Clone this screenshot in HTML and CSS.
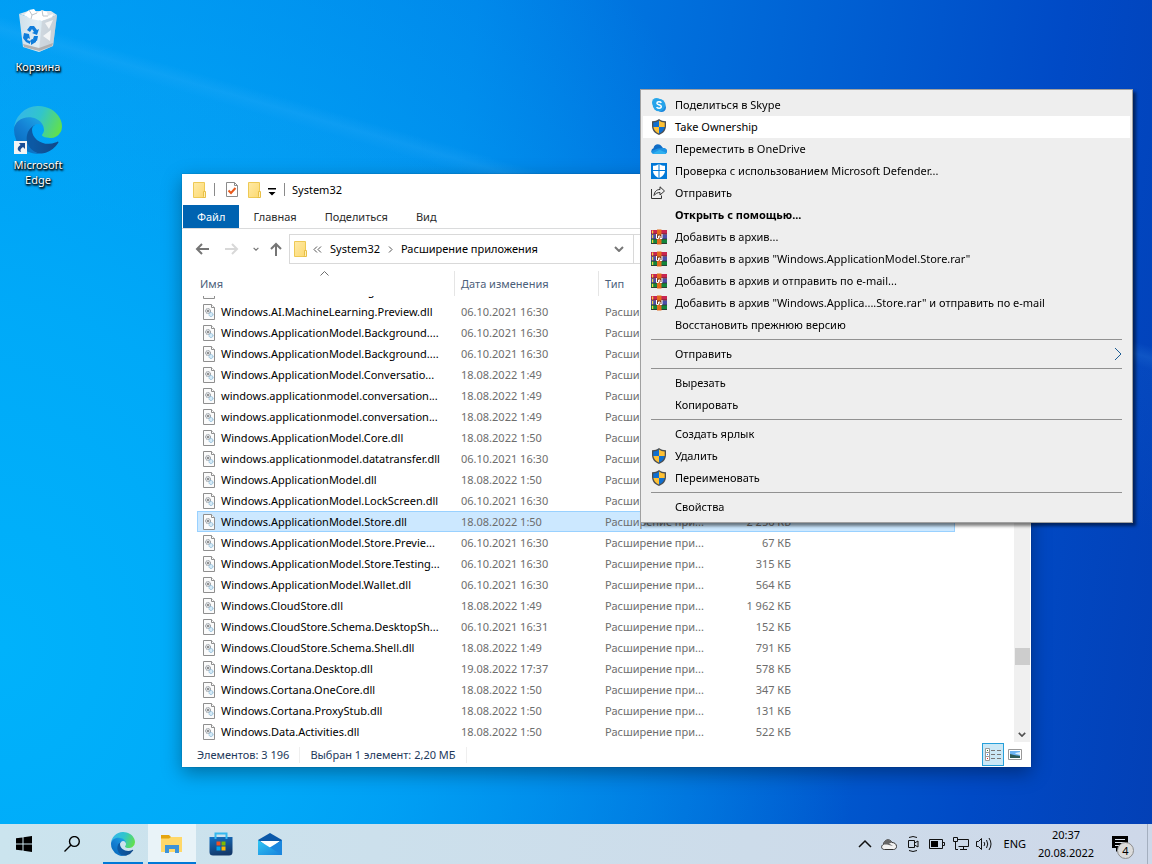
FILE: index.html
```html
<!DOCTYPE html>
<html lang="ru">
<head>
  <meta charset="UTF-8" />
  <title>System32</title>
  <link rel="stylesheet" href="styles.css">
</head>
<body>
  <svg class="sprite" aria-hidden="true">
    <defs>
      <linearGradient id="edgeNavy" x1="0.25" y1="0" x2="0.9" y2="0"><stop offset="0" stop-color="#0c59a4"/><stop offset="1" stop-color="#114a8b"/></linearGradient>
      <linearGradient id="edgeBlue" x1="0.8" y1="0.2" x2="0.2" y2="1"><stop offset="0" stop-color="#1b9de2"/><stop offset="0.4" stop-color="#1480d4"/><stop offset="1" stop-color="#0669bb"/></linearGradient>
      <linearGradient id="edgeGreen" x1="0" y1="0.3" x2="1" y2="0.6"><stop offset="0" stop-color="#35b5ec"/><stop offset="0.5" stop-color="#31c5cc"/><stop offset="1" stop-color="#62e04c"/></linearGradient>
      <linearGradient id="gold" x1="0" y1="0" x2="1" y2="1"><stop offset="0" stop-color="#ffeaa6"/><stop offset="1" stop-color="#fcd971"/></linearGradient>
      <linearGradient id="mailBlue" x1="0" y1="0" x2="1" y2="1"><stop offset="0" stop-color="#32c8f4"/><stop offset="1" stop-color="#1681dc"/></linearGradient>
      <linearGradient id="bagBlue" x1="0" y1="0" x2="0.3" y2="1"><stop offset="0" stop-color="#1473c8"/><stop offset="1" stop-color="#143a6c"/></linearGradient>
      <linearGradient id="binSide" x1="0" y1="0" x2="1" y2="0"><stop offset="0" stop-color="#dfe5ea"/><stop offset="0.5" stop-color="#f2f4f5"/><stop offset="1" stop-color="#c5cdd4"/></linearGradient>
    </defs>
    <symbol id="i-edge" viewBox="0 0 256 256">
      <g transform="translate(-4.63 -4.92)">
        <path fill="url(#edgeNavy)" d="M235.68,195.46a93.73,93.73,0,0,1-10.54,4.71,101.87,101.87,0,0,1-35.9,6.46c-47.32,0-88.54-32.55-88.54-74.32A31.48,31.48,0,0,1,117.13,105c-42.8,1.8-53.8,46.4-53.8,72.53,0,73.88,68.09,81.37,82.76,81.37,7.91,0,19.84-2.3,27-4.56l1.31-.44A128.34,128.34,0,0,0,241,201.1,4,4,0,0,0,235.68,195.46Z"/>
        <path fill="url(#edgeBlue)" d="M110.34,246.34A79.2,79.2,0,0,1,87.6,225a80.72,80.72,0,0,1,29.53-120c3.12-1.47,8.45-4.13,15.54-4a32.35,32.35,0,0,1,25.69,13,31.88,31.88,0,0,1,6.36,18.66c0-.21,24.46-79.6-80-79.6-43.9,0-80,41.66-80,78.21a130.15,130.15,0,0,0,12.11,56,128,128,0,0,0,156.38,67.11,75.55,75.55,0,0,1-62.78-8Z"/>
        <path fill="url(#edgeGreen)" d="M156.94,153.78c-.81,1.05-3.3,2.5-3.3,5.66,0,2.61,1.7,5.12,4.72,7.23,14.38,10,41.49,8.68,41.56,8.68a59.56,59.56,0,0,0,30.27-8.35A61.38,61.38,0,0,0,260.6,114.2c.26-22.41-8-37.31-11.34-43.91C228.08,28.76,182.35,4.89,132.61,4.89a128,128,0,0,0-128,126.2C5.09,94.6,41.35,65.12,84.61,65.12c3.5,0,23.46.34,42,10.07,16.34,8.58,24.9,18.94,30.85,29.21,6.18,10.67,7.28,24.15,7.28,29.52S162,147.27,156.94,153.78Z"/>
      </g>
    </symbol>
    <symbol id="i-bin" viewBox="0 0 48 48">
      <path d="M5 6L9 39L25 44L39 38L43 7L28 13Z" fill="url(#binSide)" opacity="0.93"/>
      <path d="M5 6L14 3L37 3L43 7L28 13Z" fill="#dfe5ea"/>
      <path d="M10 7L15 2L20 1L23 5L28 2L33 4L34 8L39 6L38 10L28 13L17 11Z" fill="#fff"/>
      <path d="M15 2L18 7L23 5M28 2L29 8L34 8M18 7L17 11" stroke="#bcc4ca" fill="none"/>
      <path d="M28 13L43 7L39 38L25 44Z" fill="#cbd2d8" opacity="0.75"/>
      <path d="M31 15L39 12L35 21ZM29 28L37 22L36 33Z" fill="#f3f5f6"/>
      <path d="M9 36L25 40L39 35L38 38L25 43L10 39Z" fill="#a9a5a4" opacity="0.8"/>
      <path d="M13 22L16 18L20 18L23 22L25 21L23 27L18 25L20 24L18 21L16 24ZM10 25L15 26L16 31L14 30L13 32L16 33L16 36L12 34L9 30ZM18 31L22 32L22 34L17 37L17 35L16 33ZM20 28L24 28L23 33L19 31Z" fill="#0f7ddb"/>
    </symbol>
    <symbol id="i-shortcut" viewBox="0 0 13 13">
      <path d="M0 0H13V13H0Z" fill="#f4f4f4"/>
      <path d="M5 2H11V8L9 6C6.500 7.500 6 9 7 11C3 10 2.500 6.500 6.500 4Z" fill="#1b4e95"/>
    </symbol>
    <symbol id="i-folder" viewBox="0 0 16 18">
      <path d="M1.500 1.500H12.500V16.500H1.500Z" fill="url(#gold)" stroke="#eec954"/>
      <path d="M11.500 10.500H13.500V16.500H10.500L11.500 15.500Z" fill="#fff0b8" stroke="#e8bf46"/>
    </symbol>
    <symbol id="i-check" viewBox="0 0 14 17">
      <path d="M1.500 1.500H9.500L12.500 4.500V15.500H1.500Z" fill="#fff" stroke="#8b8b8b"/>
      <path d="M9.500 1.500V4.500H12.500" fill="none" stroke="#8b8b8b"/>
      <path d="M3.500 9.500L6 12L10.500 7" fill="none" stroke="#e8591c" stroke-width="2"/>
    </symbol>
    <symbol id="i-dll" viewBox="0 0 12 16">
      <path d="M0.500 0.500H8.500L11.500 3.500V15.500H0.500Z" fill="#fbfbfb" stroke="#8f8f8f"/>
      <path d="M8.500 0.500V3.500H11.500" fill="#fff" stroke="#8f8f8f"/>
      <circle cx="5" cy="7" r="2.500" fill="#dcdfe2" stroke="#7f868c" stroke-dasharray="1 0.600"/>
      <circle cx="5" cy="7" r="1" fill="#777"/>
      <circle cx="8" cy="10.500" r="2" fill="#d5ebf8" stroke="#7eb0d0" stroke-dasharray="1 0.500"/>
    </symbol>
    <symbol id="i-skype" viewBox="0 0 16 16">
      <circle cx="5.500" cy="5.500" r="4.500" fill="#2aa8ea"/>
      <circle cx="10.500" cy="10.500" r="4.500" fill="#1b86dc"/>
      <circle cx="8" cy="8" r="6.300" fill="#26a3ea"/>
      <path d="M10.300 5.800C9.600 4.400 5.900 4.200 5.900 6.200C5.900 8.200 10.300 7.300 10.300 9.600C10.300 11.700 6.300 11.700 5.700 10" fill="none" stroke="#fff" stroke-width="1.500"/>
    </symbol>
    <symbol id="i-shield" viewBox="0 0 16 16">
      <path d="M8 0C10 1.500 12 2.200 15 2.200V7C15 11.500 12 14.500 8 16C4 14.500 1 11.500 1 7V2.200C4 2.200 6 1.500 8 0Z" fill="#4c4f52"/>
      <path d="M8 1.500V8H2.300V3.500C4.700 3.400 6.500 2.800 8 1.500Z" fill="#0f6fd0"/>
      <path d="M8 1.500V8H13.700V3.500C11.300 3.400 9.500 2.800 8 1.500Z" fill="#ffc134"/>
      <path d="M2.400 8H8V14.600C5 13.300 2.700 11 2.400 8Z" fill="#ffc134"/>
      <path d="M13.600 8H8V14.600C11 13.300 13.300 11 13.600 8Z" fill="#0f6fd0"/>
    </symbol>
    <symbol id="i-onedrive" viewBox="0 0 16 16">
      <path d="M3 12C0 12-0.500 8 2.500 7.200C3 3.500 8 1.500 10.800 5.500L12 7C14 7 16 8 16 10C16 12 14.500 13 13 13Z" fill="#0f6cc6"/>
      <path d="M3 13C1 13 0 11.500 0.300 10L7 7.500L12 7C14.500 7 16 8.300 16 10.300C16 12 14.500 13 13 13Z" fill="#1e93e4"/>
      <path d="M1.500 12.500L8.500 8.800L15.500 12C15 12.700 14 13 13 13H3C2.500 13 2 12.800 1.500 12.500Z" fill="#2fb0f0"/>
    </symbol>
    <symbol id="i-defender" viewBox="0 0 16 16">
      <path d="M0 0H16V16H0Z" fill="#0078d7"/>
      <path d="M8 1C10 2.300 12 2.800 14 2.800V7.500C14 11 11.500 13.700 8 15C4.500 13.700 2 11 2 7.500V2.800C4 2.800 6 2.300 8 1Z" fill="#fff"/>
      <path d="M7.500 1H8.500V15H7.500ZM2 7H14V8H2Z" fill="#0078d7"/>
    </symbol>
    <symbol id="i-share" viewBox="0 0 16 16" fill="none" stroke="#333">
      <path d="M0.500 4V13.500H10.500V10.500"/>
      <path d="M3 10.500C3.500 6.500 5.500 4.500 9 4.500V1.800L13.500 6L9 10V7.500C6.500 7.500 4.800 8.300 3 10.500Z"/>
    </symbol>
    <symbol id="i-rar" viewBox="0 0 16 16">
      <path d="M0 1H16V5.500H0Z" fill="#c8254f"/>
      <path d="M0 5.500H16V10H0Z" fill="#4b4fa8"/>
      <path d="M0 10H16V15H0Z" fill="#14853c"/>
      <path d="M0 5H16M0 10H16M0 14.500H16" stroke="#33232f" stroke-width="0.700"/>
      <path d="M1 1.500H2.200V4.500H1ZM1 6H2.200V9.300H1ZM1 10.700H2.200V14H1Z" fill="#f4d442"/>
      <path d="M6 0.500H10.500V15.500H6Z" fill="#e46a1c"/>
      <path d="M6 5.500H10.500V10H6Z" fill="#7d3a16"/>
      <path d="M5.500 5V9.500H7.500V7H9V9.500H11V5" fill="none" stroke="#fff"/>
    </symbol>
    <symbol id="i-chevron" viewBox="0 0 10 6"><path d="M1 1L5 5L9 1" fill="none" stroke="currentColor" stroke-width="2"/></symbol>
  </svg>

  <div class="desktop">
    <nav class="shortcuts">
      <a class="shortcut" href="#">
        <svg class="shortcut-icon"><use href="#i-bin"/></svg>
        <span>Корзина</span>
      </a>
      <a class="shortcut" href="#">
        <svg class="shortcut-icon"><use href="#i-edge"/></svg>
        <svg class="shortcut-arrow"><use href="#i-shortcut"/></svg>
        <span>Microsoft<br>Edge</span>
      </a>
    </nav>

    <main class="window">
      <header class="titlebar">
        <svg class="folder"><use href="#i-folder"/></svg>
        <i class="bar"></i>
        <svg class="check"><use href="#i-check"/></svg>
        <svg class="folder"><use href="#i-folder"/></svg>
        <svg class="more" viewBox="0 0 8 8"><path d="M0 0H8V1.500H0ZM0.500 4H7.500L4 7.500Z"/></svg>
        <i class="bar"></i>
        <h1>System32</h1>
      </header>

      <div class="tabs">
        <button class="tab file">Файл</button>
        <button class="tab">Главная</button>
        <button class="tab">Поделиться</button>
        <button class="tab">Вид</button>
      </div>

      <div class="navbar">
        <button class="nav-btn" aria-label="Назад"><svg viewBox="0 0 14 12"><path d="M14 6H2M7 1L2 6L7 11"/></svg></button>
        <button class="nav-btn off" aria-label="Вперед"><svg viewBox="0 0 14 12"><path d="M0 6H12M7 1L12 6L7 11"/></svg></button>
        <button class="nav-btn small" aria-label="Журнал"><svg class="chev"><use href="#i-chevron"/></svg></button>
        <button class="nav-btn up" aria-label="Вверх"><svg viewBox="0 0 14 14"><path d="M7 14V2M2 7L7 2L12 7"/></svg></button>
        <div class="address">
          <svg class="folder"><use href="#i-folder"/></svg>
          <svg class="crumb-sep double" viewBox="0 0 9 7"><path d="M4 0.500L1 3.500L4 6.500M8 0.500L5 3.500L8 6.500"/></svg>
          <a href="#">System32</a>
          <svg class="crumb-sep" viewBox="0 0 5 7"><path d="M1 0.500L4 3.500L1 6.500"/></svg>
          <a href="#">Расширение приложения</a>
          <button class="drop" aria-label="Предыдущие расположения"><svg class="chev"><use href="#i-chevron"/></svg></button>
        </div>
        <div class="address rest"></div>
      </div>

      <div class="content">
        <div class="list" id="list">
          <table>
            <colgroup><col class="c-name"><col class="c-date"><col class="c-type"><col class="c-size"><col></colgroup>
            <thead>
              <tr>
                <th>Имя<svg class="sort" viewBox="0 0 9 5"><path d="M0.500 4.500L4.500 0.500L8.500 4.500"/></svg></th>
                <th>Дата изменения</th>
                <th>Тип</th>
                <th></th>
                <th class="last"></th>
              </tr>
            </thead>
            <tbody id="files"></tbody>
          </table>
        </div>
        <div class="scrollbar">
          <span class="thumb"></span>
          <svg class="chev scroll-down"><use href="#i-chevron"/></svg>
        </div>
      </div>

      <footer class="status">
        <span>Элементов: 3 196</span>
        <span>Выбран 1 элемент: 2,20 МБ</span>
        <div class="views">
          <button class="view active" aria-label="Таблица">
            <svg width="16" height="14" viewBox="0 0 16 14"><path d="M0.500 0.500H4.500V12.500H0.500ZM0.500 4.500H4.500M0.500 8.500H4.500" fill="#fff" stroke="#999"/><path d="M6 2.500H10M12 2.500H16M6 6.500H10M12 6.500H16M6 10.500H10M12 10.500H16" stroke="#777"/><path d="M2 2H3V3H2Z" fill="#373"/><path d="M2 6H3V7H2Z" fill="#28f"/><path d="M2 10H3V11H2Z" fill="#e22"/></svg>
          </button>
          <button class="view" aria-label="Крупные значки">
            <svg width="14" height="11" viewBox="0 0 14 11"><path d="M0.500 0.500H13.500V10.500H0.500Z" fill="#fff" stroke="#999"/><path d="M2 2H12V9H2Z" fill="#6cb3f2"/><path d="M2 5L6 6L12 7V9H2Z" fill="#2f5a55"/><path d="M7 4L12 3V6L8 5Z" fill="#d9eefc"/></svg>
          </button>
        </div>
      </footer>
    </main>

    <div class="menu" role="menu">
      <button role="menuitem"><svg><use href="#i-skype"/></svg>Поделиться в Skype</button>
      <button role="menuitem" class="hover"><svg><use href="#i-shield"/></svg>Take Ownership</button>
      <button role="menuitem"><svg><use href="#i-onedrive"/></svg>Переместить в OneDrive</button>
      <button role="menuitem"><svg><use href="#i-defender"/></svg>Проверка с использованием Microsoft Defender...</button>
      <button role="menuitem"><svg><use href="#i-share"/></svg>Отправить</button>
      <button role="menuitem" class="default">Открыть с помощью...</button>
      <button role="menuitem"><svg><use href="#i-rar"/></svg>Добавить в архив...</button>
      <button role="menuitem"><svg><use href="#i-rar"/></svg>Добавить в архив "Windows.ApplicationModel.Store.rar"</button>
      <button role="menuitem"><svg><use href="#i-rar"/></svg>Добавить в архив и отправить по e-mail...</button>
      <button role="menuitem"><svg><use href="#i-rar"/></svg>Добавить в архив "Windows.Applica....Store.rar" и отправить по e-mail</button>
      <button role="menuitem">Восстановить прежнюю версию</button>
      <hr>
      <button role="menuitem">Отправить<svg class="sub" viewBox="0 0 8 14"><path d="M1 1L7 7L1 13"/></svg></button>
      <hr>
      <button role="menuitem">Вырезать</button>
      <button role="menuitem">Копировать</button>
      <hr>
      <button role="menuitem">Создать ярлык</button>
      <button role="menuitem"><svg><use href="#i-shield"/></svg>Удалить</button>
      <button role="menuitem"><svg><use href="#i-shield"/></svg>Переименовать</button>
      <hr>
      <button role="menuitem">Свойства</button>
    </div>
  </div>

  <footer class="taskbar">
    <button class="task" aria-label="Пуск"><svg width="16" height="16" viewBox="0 0 16 16"><path d="M0 2.300L6.500 1.400V7.500H0ZM7.500 1.200L16 0V7.500H7.500ZM0 8.500H6.500V14.600L0 13.700ZM7.500 8.500H16V16L7.500 14.800Z"/></svg></button>
    <button class="task" aria-label="Поиск"><svg width="16" height="16" viewBox="0 0 16 16"><path d="M0.500 15.500L6.500 9.500M15.300 5.500A4.900 4.900 0 1 1 5.500 5.500A4.900 4.900 0 1 1 15.300 5.500Z" fill="none" stroke="#000" stroke-width="1.400"/></svg></button>
    <div class="pinned">
      <button class="task running" aria-label="Microsoft Edge"><svg width="24" height="24"><use href="#i-edge"/></svg></button>
      <button class="task current" aria-label="Проводник"><svg width="22" height="18" viewBox="0 0 22 18"><path d="M0 0H8L10 2H21V17H0Z" fill="#e5a50f"/><path d="M0 3.500H8L10 2H21V17H0Z" fill="#ffd869"/><path d="M4 18V10H18V18H14V14H8V18Z" fill="#3d93d8"/></svg></button>
      <button class="task" aria-label="Microsoft Store"><svg width="24" height="24" viewBox="0 0 24 24"><path d="M0.500 5H23.500V20Q23.500 23.500 20 23.500H4Q0.500 23.500 0.500 20Z" fill="url(#bagBlue)"/><path d="M6.500 7V1.500H17.500V7" fill="none" stroke="#35b8ee" stroke-width="2"/><path d="M7.500 9.500H11.500V13.500H7.500Z" fill="#f25022"/><path d="M12.500 9.500H16.500V13.500H12.500Z" fill="#7fba00"/><path d="M7.500 14.500H11.500V18.500H7.500Z" fill="#00a4ef"/><path d="M12.500 14.500H16.500V18.500H12.500Z" fill="#ffb900"/></svg></button>
      <button class="task" aria-label="Почта"><svg width="24" height="24" viewBox="0 0 24 24"><path d="M0 8L12 1L24 8V12H0Z" fill="#0a57a8"/><path d="M2 9H22L12 17Z" fill="#fff"/><path d="M24 8L11 16L20 23H24Z" fill="#1b87de"/><path d="M0 8L24 23H0Z" fill="url(#mailBlue)"/></svg></button>
    </div>

    <div class="tray">
      <button class="tray-icon" aria-label="Скрытые значки"><svg width="14" height="14" viewBox="0 0 14 14"><path d="M1 10L7 4L13 10" fill="none" stroke="#111" stroke-width="1.500"/></svg></button>
      <button class="tray-icon" aria-label="OneDrive"><svg width="16" height="12" viewBox="0 0 16 12"><path d="M3.500 11.500C0 11.500-0.300 7.500 2.500 6.500C2.500 2 8.500-0.500 11 4.500C13.500 4.500 15.500 6 15.500 8.500C15.500 10.500 14 11.500 12.500 11.500Z" fill="#f2f2f2" stroke="#333"/><path d="M2.500 6.500C3 2 8-0.500 11 4.500L8 5.500L12 8L6 6.500Z" fill="#666"/></svg></button>
      <button class="tray-icon" aria-label="Собрание"><svg width="12" height="16" viewBox="0 0 12 16" fill="none" stroke="#111"><path d="M2 1.500Q6-0.500 10 1.500M2 14.500Q6 16.500 10 14.500M1.500 4.500H7.500V11.500H1.500ZM7.500 7L11 5V11L7.500 9"/></svg></button>
      <button class="tray-icon" aria-label="Батарея"><svg width="16" height="10" viewBox="0 0 16 10"><path d="M0.500 0.500H13.500V9.500H0.500ZM13.500 3.500H15.500V6.500H13.500" fill="none" stroke="#111"/><path d="M2 2H9V8H2Z"/></svg></button>
      <button class="tray-icon" aria-label="Сеть"><svg width="16" height="14" viewBox="0 0 16 14" fill="none" stroke="#111"><path d="M5 2.500H15.500V9.500H5.500M10.500 9.500V12.500M7 12.500H14M0.500 0.500H4.500V4.500H0.500ZM2.500 4.500V12.500H5"/></svg></button>
      <button class="tray-icon" aria-label="Громкость"><svg width="17" height="14" viewBox="0 0 17 14" fill="none" stroke="#111"><path d="M0.500 4.500H2.500L5.500 1.500V12.500L2.500 9.500H0.500ZM8 5Q9.500 7 8 9M10.500 3Q13 7 10.500 11M13 1Q17 7 13 13"/></svg></button>
      <button class="lang">ENG</button>
      <button class="clock">20:37<br>20.08.2022</button>
      <button class="notify" aria-label="Уведомления">
        <svg width="16" height="16" viewBox="0 0 16 16"><path d="M0 0H16V12H8L4 16V12H0Z"/><path d="M3 3.500H13M3 6.500H13M3 9.500H9" stroke="#dde4ef"/></svg>
        <span class="badge">4</span>
      </button>
      <button class="peek" aria-label="Свернуть все окна"></button>
    </div>
  </footer>

  <script>
    const files = [
      ["Windows.AI.MachineLearning.dll", "", ""],
      ["Windows.AI.MachineLearning.Preview.dll", "06.10.2021 16:30", ""],
      ["Windows.ApplicationModel.Background....", "06.10.2021 16:30", ""],
      ["Windows.ApplicationModel.Background....", "06.10.2021 16:30", ""],
      ["Windows.ApplicationModel.Conversatio...", "18.08.2022 1:49", ""],
      ["windows.applicationmodel.conversation...", "18.08.2022 1:49", ""],
      ["windows.applicationmodel.conversation...", "18.08.2022 1:49", ""],
      ["Windows.ApplicationModel.Core.dll", "18.08.2022 1:50", ""],
      ["windows.applicationmodel.datatransfer.dll", "06.10.2021 16:30", ""],
      ["Windows.ApplicationModel.dll", "18.08.2022 1:50", ""],
      ["Windows.ApplicationModel.LockScreen.dll", "06.10.2021 16:30", ""],
      ["Windows.ApplicationModel.Store.dll", "18.08.2022 1:50", "2 256 КБ"],
      ["Windows.ApplicationModel.Store.Previe...", "06.10.2021 16:30", "67 КБ"],
      ["Windows.ApplicationModel.Store.Testing...", "06.10.2021 16:30", "315 КБ"],
      ["Windows.ApplicationModel.Wallet.dll", "06.10.2021 16:30", "564 КБ"],
      ["Windows.CloudStore.dll", "18.08.2022 1:49", "1 962 КБ"],
      ["Windows.CloudStore.Schema.DesktopSh...", "06.10.2021 16:31", "152 КБ"],
      ["Windows.CloudStore.Schema.Shell.dll", "18.08.2022 1:49", "791 КБ"],
      ["Windows.Cortana.Desktop.dll", "19.08.2022 17:37", "578 КБ"],
      ["Windows.Cortana.OneCore.dll", "18.08.2022 1:50", "347 КБ"],
      ["Windows.Cortana.ProxyStub.dll", "18.08.2022 1:50", "131 КБ"],
      ["Windows.Data.Activities.dll", "18.08.2022 1:50", "522 КБ"]
    ];
    const selected = "Windows.ApplicationModel.Store.dll";

    const tbody = document.getElementById("files");
    files.forEach(([name, date, size]) => {
      const tr = document.createElement("tr");
      if (name === selected) tr.className = "selected";
      tr.innerHTML = `
        <td class="name"><svg><use href="#i-dll"/></svg>${name}</td>
        <td>${date}</td>
        <td>${date ? "Расширение при..." : ""}</td>
        <td class="size">${size}</td>
        <td></td>
      `;
      tbody.appendChild(tr);
    });

    const list = document.getElementById("list");
    list.scrollTop = list.scrollHeight;
  </script>
</body>
</html>
```

FILE: styles.css
```css
* {
  box-sizing: border-box;
}
body {
  margin: 0;
  height: 100vh;
  display: flex;
  flex-direction: column;
  overflow: hidden;
  font-family: "Noto Sans", "Open Sans", sans-serif;
  font-size: 11px;
  line-height: 16px;
  color: #000;
  background:
    linear-gradient(196deg, rgba(90,190,255,0) 29%, rgba(90,190,255,0.14) 30%, rgba(90,190,255,0.04) 31%, rgba(90,190,255,0) 45%),
    radial-gradient(ellipse 75% 110% at 0% 75%, #00b2fb 0%, rgba(0,174,250,0.85) 35%, rgba(0,150,240,0) 100%),
    linear-gradient(97deg, #0093f0 0%, #0082e8 38%, #0062d4 65%, #004ac6 85%, #0340b6 100%);
}
button {
  font: inherit;
  color: inherit;
  border: 0;
  padding: 0;
  background: none;
}
a {
  color: inherit;
  text-decoration: none;
}
svg {
  display: block;
  flex: none;
}
.sprite {
  position: absolute;
  width: 0;
  height: 0;
}
.desktop {
  flex: 1;
  position: relative;
  min-height: 0;
}

/* desktop shortcuts */
.shortcuts {
  display: flex;
  flex-direction: column;
  gap: 32px;
  width: 76px;
  padding-top: 8px;
}
.shortcut {
  position: relative;
  display: flex;
  flex-direction: column;
  align-items: center;
  gap: 3px;
  line-height: 15px;
  text-align: center;
  color: #fff;
  text-shadow: 0 1px 2px #000, 1px 1px 2px #000, 1px 2px 2px rgba(0,0,0,0.7);
}
.shortcut-icon {
  width: 48px;
  height: 48px;
}
.shortcut-arrow {
  position: absolute;
  left: 14px;
  top: 35px;
  width: 13px;
  height: 13px;
}

/* explorer window */
.window {
  position: absolute;
  left: 182px;
  top: 174px;
  width: 849px;
  height: 593px;
  display: flex;
  flex-direction: column;
  background: #fff;
  box-shadow: 0 6px 18px rgba(0,0,0,0.35), 0 0 1px rgba(0,0,0,0.4);
}
.titlebar {
  display: flex;
  align-items: center;
  height: 31px;
  padding-left: 10px;
}
.titlebar h1 {
  margin: 0 0 0 7px;
  font-size: 11px;
  font-weight: normal;
}
.folder {
  width: 16px;
  height: 18px;
}
.bar {
  width: 1px;
  height: 13px;
  margin-left: 6px;
  background: #8a8a8a;
}
.check {
  width: 14px;
  height: 17px;
  margin: 0 8px 0 10px;
}
.more {
  width: 8px;
  height: 8px;
  margin: 4px 2px 0 5px;
}
.tabs {
  display: flex;
  height: 24px;
  padding-left: 1px;
  border-bottom: 1px solid #dadbdc;
}
.tab {
  padding: 0 14px;
  color: #2b2b2b;
}
.tab.file {
  background: #0063b1;
  color: #fff;
}
.navbar {
  display: flex;
  align-items: center;
  height: 42px;
  padding: 0 6px 2px 13px;
}
.nav-btn svg {
  width: 14px;
  height: 12px;
  fill: none;
  stroke: #757575;
  stroke-width: 2;
}
.nav-btn {
  margin-right: 16px;
}
.nav-btn.off {
  margin-right: 14px;
}
.nav-btn.off svg {
  stroke: #d8d8d8;
}
.nav-btn.small {
  margin-right: 10px;
}
.nav-btn.up {
  margin-right: 6px;
}
.nav-btn.up svg {
  height: 14px;
}
.nav-btn .chev {
  width: 6px;
  height: 4px;
}
.chev {
  width: 10px;
  height: 6px;
  color: #777;
}
.address {
  display: flex;
  align-items: center;
  width: 345px;
  height: 30px;
  padding-left: 3px;
  border: 1px solid #d9d9d9;
}
.address.rest {
  flex: 1;
  border-left: 0;
}
.address a {
  margin: 0 8px;
}
.crumb-sep {
  width: 5px;
  height: 7px;
  fill: none;
  stroke: #555;
}
.crumb-sep.double {
  width: 9px;
  margin-left: 4px;
}
.drop {
  margin: 0 9px 0 auto;
}
.content {
  flex: 1;
  min-height: 0;
  display: flex;
  padding-right: 1px;
}
.list {
  flex: 1;
  overflow: hidden;
  padding-left: 15px;
}
table {
  width: 758px;
  table-layout: fixed;
  border-spacing: 0;
}
.c-name { width: 258px; }
.c-date { width: 144px; }
.c-type { width: 120px; }
.c-size { width: 78px; }
th {
  position: sticky;
  top: 0;
  height: 25px;
  padding: 0 6px;
  font-weight: normal;
  text-align: left;
  color: #4c607a;
  background: #fff;
  border-right: 1px solid #e5e5e5;
}
th:first-child {
  padding-left: 3px;
}
th.last {
  border: 0;
}
.sort {
  position: absolute;
  left: 123px;
  top: 0;
  width: 9px;
  height: 5px;
  fill: none;
  stroke: #6d6d6d;
}
td {
  height: 21px;
  padding: 0 6px;
  color: #6d6d6d;
  white-space: nowrap;
}
td.name {
  display: flex;
  align-items: center;
  gap: 6px;
  color: #000;
}
td.name svg {
  width: 12px;
  height: 16px;
}
td.size {
  text-align: right;
}
tr.selected {
  background: #cce8ff;
  outline: 1px solid #99d1ff;
  outline-offset: -1px;
}
.scrollbar {
  display: flex;
  flex-direction: column;
  align-items: center;
  width: 16px;
  padding-bottom: 5px;
  background: #f0f0f0;
}
.thumb {
  width: 15px;
  height: 17px;
  margin-top: auto;
  background: #cdcdcd;
}
.scroll-down {
  width: 8px;
  height: 5px;
  margin-top: 67px;
  color: #505050;
}
.status {
  display: flex;
  align-items: center;
  height: 25px;
  padding: 0 6px 0 15px;
  color: #1e395b;
}
.status span {
  padding-right: 10px;
  margin-right: 10px;
  border-right: 1px solid #efefef;
}
.views {
  display: flex;
  margin-left: auto;
}
.view {
  display: flex;
  align-items: center;
  justify-content: center;
  width: 21px;
  height: 23px;
}
.view.active {
  width: 22px;
  background: #cbe8f6;
  border: 1px solid #26a0da;
}

/* context menu */
.menu {
  position: absolute;
  left: 640px;
  top: 89px;
  width: 493px;
  padding: 4px 2px;
  background: #eee;
  border: 1px solid #a0a0a0;
  box-shadow: 3px 3px 3px rgba(0,0,0,0.5);
}
.menu button {
  position: relative;
  display: block;
  width: 100%;
  height: 22px;
  padding-left: 32px;
  text-align: left;
  white-space: nowrap;
}
.menu svg {
  position: absolute;
  left: 8px;
  top: 3px;
  width: 16px;
  height: 16px;
}
.menu svg.sub {
  left: auto;
  right: 8px;
  top: 4px;
  width: 8px;
  height: 14px;
  fill: none;
  stroke: #1c5c93;
}
.menu .hover {
  background: #fff;
}
.menu .default {
  font-weight: bold;
}
.menu hr {
  height: 1px;
  margin: 3px 8px;
  border: 0;
  background: #919191;
}

/* taskbar */
.taskbar {
  display: flex;
  height: 40px;
  background: linear-gradient(90deg, #cbe4ee, #cddcea 65%, #ced8e9);
}
.task {
  display: flex;
  align-items: center;
  justify-content: center;
  width: 48px;
  height: 40px;
}
.pinned {
  display: flex;
  gap: 1px;
  margin-left: 3px;
}
.running {
  background: linear-gradient(#0078d7, #0078d7) center bottom / 40px 2px no-repeat;
}
.current {
  background: #e9f3f8;
  box-shadow: inset 0 -2px #0078d7;
}
.tray {
  display: flex;
  align-items: center;
  margin-left: auto;
}
.tray-icon {
  display: flex;
  align-items: center;
  justify-content: center;
  width: 24px;
  height: 40px;
}
.lang {
  padding: 0 6px 0 7px;
}
.clock {
  width: 68px;
  line-height: 18px;
}
.notify {
  position: relative;
  display: flex;
  align-items: center;
  justify-content: center;
  width: 40px;
  height: 40px;
  margin-right: 7px;
}
.badge {
  position: absolute;
  left: 17px;
  top: 18px;
  width: 17px;
  height: 17px;
  border: 1px solid #8d8d8d;
  border-radius: 50%;
  background: #dcdcdc;
  line-height: 15px;
}
.peek {
  width: 5px;
  height: 40px;
  border-left: 1px solid #a4afbf;
}
```
